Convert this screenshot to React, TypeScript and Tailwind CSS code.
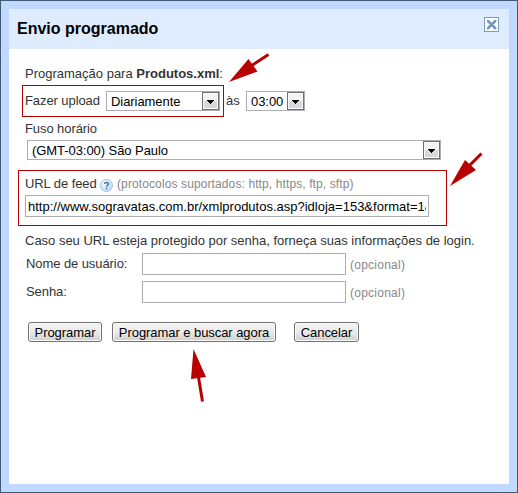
import React from "react";

function Chevron() {
  return (
    <span className="flex h-[18px] w-[17px] shrink-0 items-center justify-center border border-[#707070] bg-linear-to-b from-[#f3f3f3] from-50% to-[#d9d9d9] to-50% shadow-[inset_0_0_0_1px_#fafafa]">
      <svg width="7" height="4" viewBox="0 0 7 4" className="mt-px" shapeRendering="crispEdges">
        <path d="M0 0H7V1H6V2H5V3H4V4H3V3H2V2H1V1H0Z" fill="#000" />
      </svg>
    </span>
  );
}

function Select({ value, className }: { value: string; className: string }) {
  return (
    <div className={`flex h-5 shrink-0 justify-between border border-[#abadb3] bg-white text-black ${className}`}>
      <span className="pl-1 leading-[19px] tracking-[-0.06px]">{value}</span>
      <Chevron />
    </div>
  );
}

function Button({ children, className }: { children: React.ReactNode; className: string }) {
  return (
    <button
      className={`h-5 shrink-0 rounded-[3px] border border-[#707070] bg-linear-to-b from-[#f2f2f2] from-0% via-[#ebebeb] via-50% to-[#cfcfcf] pt-px text-center leading-[18px] tracking-[-0.06px] whitespace-nowrap text-black shadow-[inset_0_0_0_1px_#fbfbfb] ${className}`}
    >
      {children}
    </button>
  );
}

function Credential({ label }: { label: string }) {
  return (
    <div className="flex h-[22px]">
      <label className="w-[116px] leading-[21px] tracking-[-0.08px]">{label}</label>
      <input className="h-[22px] w-[204px] border border-[#abadb3] bg-white" />
      <span className="pl-1 text-[12px] leading-[24px] tracking-[0.25px] text-[#888]">(opcional)</span>
    </div>
  );
}

export default function App() {
  return (
    <div className="relative h-[493px] w-[518px] overflow-hidden border border-[#415a78] bg-[#c1d8ff] p-2 font-['Liberation_Sans',Arial,sans-serif] text-[13px] text-[#333]">
      <div className="h-[475px] w-[500px] bg-white">
        <header className="flex h-10 items-start justify-between bg-[#dfecff] pr-[10px] pl-2">
          <h1 className="text-[16px] leading-[39px] font-bold text-black">Envio programado</h1>
          <svg width="15" height="15" viewBox="0 0 15 15" className="mt-2" shapeRendering="crispEdges">
            <rect x=".5" y=".5" width="14" height="14" fill="#fff" stroke="#7a9bbd" />
            <path
              d="M3 3h2v1h1v1h1v1h1v-1h1v-1h1v-1h2v2h-1v1h-1v1h-1v1h1v1h1v1h1v2h-2v-1h-1v-1h-1v-1h-1v1h-1v1h-1v1h-2v-2h1v-1h1v-1h1v-1h-1v-1h-1v-1h-1z"
              fill="#7297bd"
              stroke="#7297bd"
              strokeWidth=".4"
            />
          </svg>
        </header>

        <main className="pt-4">
          <p className="pl-4 leading-[17px]">
            Programação para <b>Produtos.xml</b>:
          </p>
          <div className="mt-[3px] flex h-8 pl-[13px]">
            <div className="flex h-8 w-[202px] items-start justify-between border border-[#b40000] pt-[5px] pr-[3px] pl-[2px]">
              <span className="leading-[19px] tracking-[-0.08px]">Fazer upload</span>
              <Select value="Diariamente" className="w-[114px]" />
            </div>
            <span className="w-[22px] pt-1.5 pl-[2px] leading-[19px]">às</span>
            <Select value="03:00" className="mt-1.5 w-[59px]" />
          </div>
          <p className="mt-[3px] pl-4 leading-[17px] tracking-[-0.08px]">Fuso horário</p>
          <Select value="(GMT-03:00) São Paulo" className="mt-[3px] ml-[18px] w-[414px]" />

          <section className="mt-[10px] ml-[9px] h-14 w-[429px] border border-[#b40000] pt-1 pl-1.5">
            <div className="flex h-5 leading-[18px]">
              <span className="w-[75px] tracking-[-0.08px]">URL de feed</span>
              <svg width="13" height="13" viewBox="0 0 13 13" className="mt-1 mr-1">
                <defs>
                  <radialGradient id="helpFill" cx=".35" cy=".25" r=".8">
                    <stop offset="0" stopColor="#fff" />
                    <stop offset="1" stopColor="#b7d8f2" />
                  </radialGradient>
                </defs>
                <circle cx="6.5" cy="6.5" r="6" fill="url(#helpFill)" stroke="#9dbdd8" strokeWidth=".9" />
                <path d="M4.6 5C4.6 2.8 8.5 2.9 8.5 5C8.5 6.3 6.6 6.2 6.6 7.7M6.6 8.8V10.2" fill="none" stroke="#4379bd" strokeWidth="1.5" />
              </svg>
              <span className="text-[12px] tracking-[0.11px] text-[#888]">(protocolos suportados: http, https, ftp, sftp)</span>
            </div>
            <div className="h-[22px] w-[404px] border border-[#abadb3] bg-white px-0.5">
              <div className="overflow-hidden leading-[21px] whitespace-nowrap text-black">
                http://www.sogravatas.com.br/xmlprodutos.asp?idloja=153&amp;format=1&amp;
              </div>
            </div>
          </section>

          <p className="mt-[6px] pl-4 leading-[17px] tracking-[-0.01px] whitespace-nowrap">
            Caso seu URL esteja protegido por senha, forneça suas informações de login.
          </p>
          <div className="mt-1 flex flex-col gap-1.5 pl-[17px]">
            <Credential label="Nome de usuário:" />
            <Credential label="Senha:" />
          </div>
          <div className="mt-[19px] flex pl-[19px]">
            <Button className="w-[74px]">Programar</Button>
            <Button className="ml-[10px] w-[164px]">Programar e buscar agora</Button>
            <Button className="ml-[18px] w-[65px]">Cancelar</Button>
          </div>
        </main>
      </div>

      <svg className="pointer-events-none absolute -top-px -left-px" width="518" height="493" viewBox="0 0 518 493" fill="#b80000" stroke="#b80000">
        <path d="M229 82L248.500 59L257.500 71.500Z" stroke="none" />
        <path d="M251 66L268.500 54.500M468 167L481.500 153.500M198.300 376L202.500 401.500" strokeWidth="3" />
        <path d="M450 186L465 160L476 170Z" stroke="none" />
        <path d="M193.500 349L191 379L206 377Z" stroke="none" />
      </svg>
    </div>
  );
}
